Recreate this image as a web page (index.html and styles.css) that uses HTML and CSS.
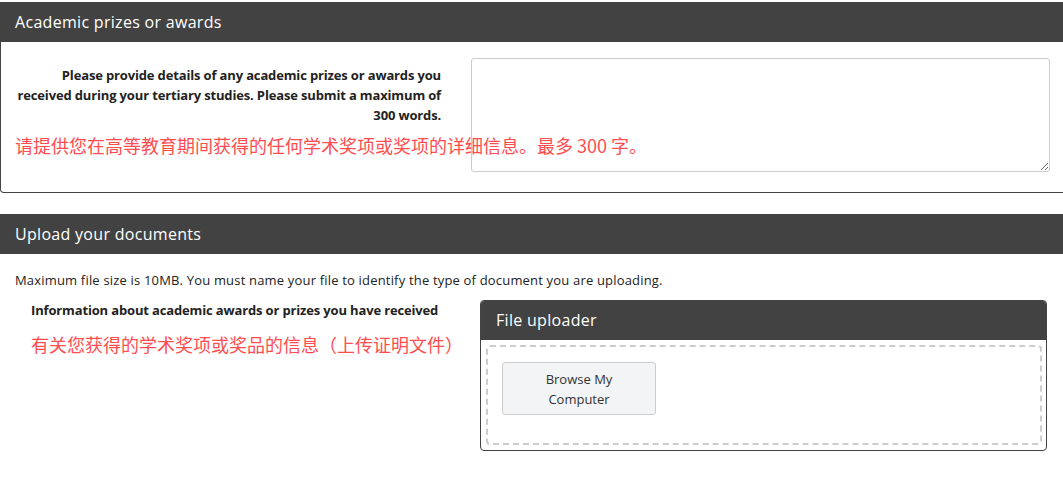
FILE: index.html
```html
<!DOCTYPE html>
<html lang="en">
<head>
  <meta charset="UTF-8">
  <title>Academic prizes or awards</title>
  <link rel="stylesheet" href="styles.css">
</head>
<body>

  <section class="panel panel-bordered">
    <h2 class="panel-title">Academic prizes or awards</h2>
    <div class="panel-body form-row">
      <div class="label-col">
        <label for="prizes" class="control-label">Please provide details of any academic prizes or awards you received during your tertiary studies. Please submit a maximum of 300 words.</label>
        <div class="note">请提供您在高等教育期间获得的任何学术奖项或奖项的详细信息。最多 300 字。</div>
      </div>
      <div class="field-col">
        <textarea id="prizes"></textarea>
      </div>
    </div>
  </section>

  <section class="panel">
    <h2 class="panel-title">Upload your documents</h2>
    <div class="panel-body upload-body">
      <p class="hint">Maximum file size is 10MB. You must name your file to identify the type of document you are uploading.</p>
      <div class="upload-row">
        <div class="upload-label">
          <strong>Information about academic awards or prizes you have received</strong>
          <div class="note">有关您获得的学术奖项或奖品的信息（上传证明文件）</div>
        </div>
        <div class="uploader">
          <h3 class="uploader-title">File uploader</h3>
          <div class="dropzone">
            <button type="button" class="browse-btn">Browse My<br>Computer</button>
          </div>
        </div>
      </div>
    </div>
  </section>

</body>
</html>
```

FILE: styles.css
```css
html, body {
  overflow: hidden;
}
body {
  margin: 0;
  padding-top: 2px;
  font-family: "Open Sans", "Noto Sans", Arial, sans-serif;
  font-size: 13px;
  line-height: 20px;
  color: #222;
  background: #fff;
}
.panel {
  margin-right: -12px;
  margin-bottom: 21px;
}
.panel-bordered {
  border: 1px solid #444;
  border-top: none;
  border-radius: 0 0 4px 4px;
}
.panel-title {
  margin: 0;
  height: 40px;
  line-height: 40px;
  padding: 0 15px;
  background: #424242;
  color: #fff;
  font-size: 16px;
  font-weight: 500;
  letter-spacing: 0.3px;
}
.panel-bordered .panel-title {
  margin: 0 -1px;
}
.form-row {
  display: grid;
  grid-template-columns: 426px 579px;
  column-gap: 30px;
  padding: 16px 0 20px 14px;
}
.label-col {
  padding-top: 7px;
}
.control-label {
  display: block;
  text-align: right;
  font-weight: bold;
  letter-spacing: -0.15px;
}
.note {
  font-family: "Noto Sans CJK SC", sans-serif;
  font-size: 18px;
  line-height: 24px;
  color: #ff4d4f;
  white-space: nowrap;
  letter-spacing: 0;
  margin-top: 8px;
}
textarea {
  display: block;
  width: 100%;
  height: 114px;
  box-sizing: border-box;
  border: 1px solid #ccc;
  border-radius: 3px;
  background: transparent;
  resize: vertical;
}
.upload-body {
  padding: 16px 0 0 15px;
}
.hint {
  margin: 0 0 10px 0;
  letter-spacing: 0.18px;
}
.upload-row {
  display: flex;
  padding-left: 16px;
  gap: 14px;
}
.upload-label {
  width: 435px;
}
.upload-label strong {
  letter-spacing: -0.15px;
}
.upload-label .note {
  margin-top: 12px;
}
.uploader {
  width: 567px;
  box-sizing: border-box;
  border: 1px solid #444;
  border-radius: 4px;
  overflow: hidden;
}
.uploader-title {
  margin: 0;
  height: 39px;
  line-height: 39px;
  padding: 0 15px;
  background: #424242;
  color: #fff;
  font-size: 16px;
  font-weight: 500;
  letter-spacing: 0.3px;
}
.dropzone {
  margin: 5px 4px 5px 5px;
  padding: 15px 15px 28px 14px;
  border: 2px dashed #ccc;
  border-radius: 4px;
}
.browse-btn {
  display: block;
  width: 154px;
  height: 53px;
  font-family: "Open Sans", "Noto Sans", Arial, sans-serif;
  font-size: 13px;
  line-height: 20px;
  color: #333;
  background: #f3f4f6;
  border: 1px solid #ccc;
  border-radius: 3px;
}
```
